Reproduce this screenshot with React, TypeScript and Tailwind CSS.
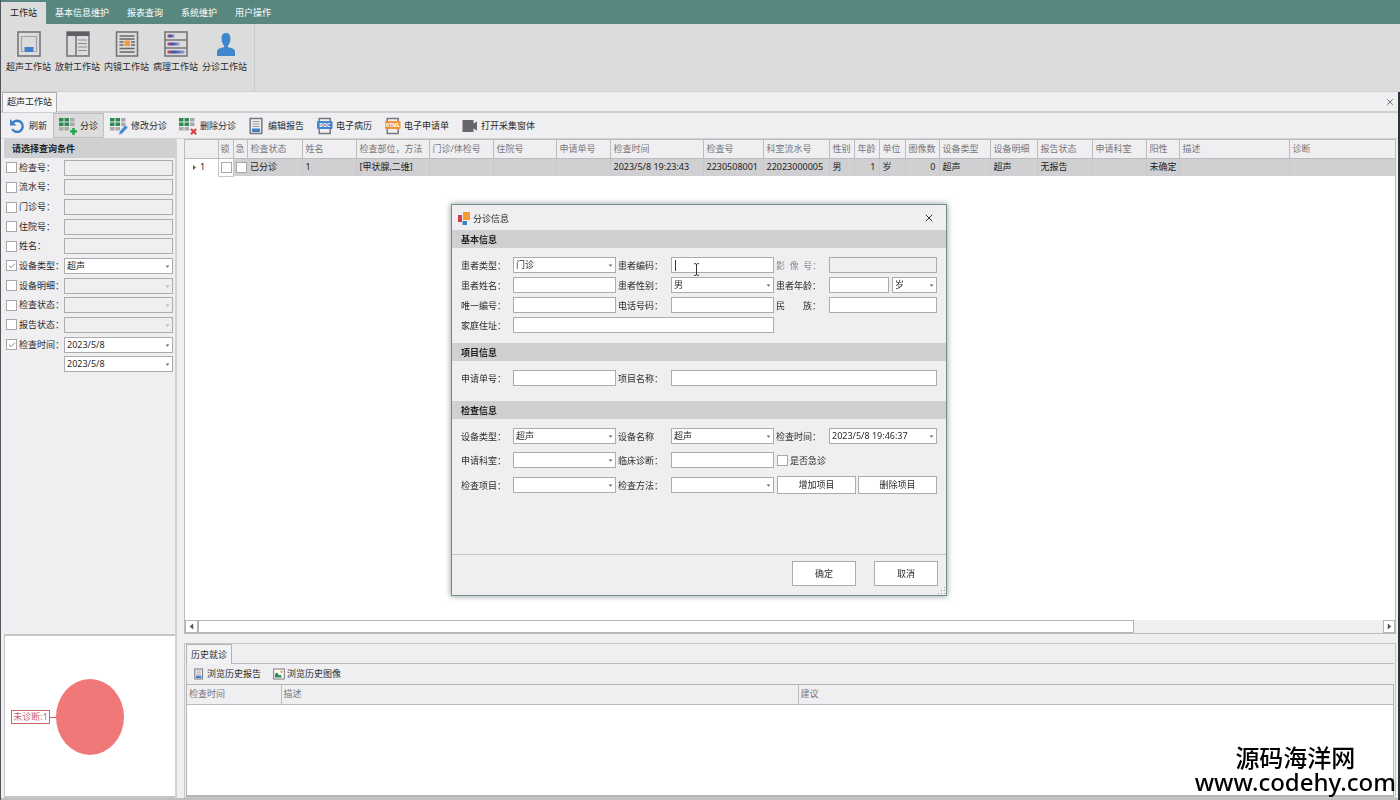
import React from "react";
import { Check, X } from "lucide-react";

const menus = ["工作站", "基本信息维护", "报表查询", "系统维护", "用户操作"];

/* ---------- icons ---------- */

const UltrasoundIcon = () => (
  <svg viewBox="0 0 24 26" className="w-6 h-[26px]" fill="none">
    <rect x="1" y="1" width="22" height="24" stroke="#77777b" strokeWidth="1.6" />
    <path d="M7 20.500H4.500v-15h15v15H17" stroke="#a3a3a7" strokeWidth="1.2" />
    <rect x="7.500" y="16" width="9" height="5" fill="#3f7fc9" />
  </svg>
);

const RadiologyIcon = () => (
  <svg viewBox="0 0 24 26" className="w-6 h-[26px]" fill="none">
    <rect x="1" y="1" width="22" height="24" stroke="#77777b" strokeWidth="1.6" />
    <rect x="1" y="1" width="22" height="4" fill="#5e5e64" />
    <path d="M10 5v20" stroke="#77777b" strokeWidth="1.6" />
    <path d="M12 9h9M12 12.500h9M12 16h9M12 19.500h9" stroke="#8d8d91" strokeWidth="1.2" />
  </svg>
);

const EndoscopeIcon = () => (
  <svg viewBox="0 0 24 26" className="w-6 h-[26px]" fill="none">
    <rect x="1.500" y="1" width="21" height="24" stroke="#77777b" strokeWidth="1.6" />
    <path
      d="M4.500 5h15M4.500 8h15M4.500 11h4M4.500 14h4M16 11h4M16 14h4M4.500 17.500h15M4.500 21h15"
      stroke="#66666b"
      strokeWidth="1.300"
    />
    <rect x="9.500" y="9.500" width="5.500" height="5.500" fill="#f29a3c" />
  </svg>
);

const PathologyIcon = () => (
  <svg viewBox="0 0 24 26" className="w-6 h-[26px]" fill="none">
    <defs>
      <linearGradient id="bar">
        <stop offset="0" stopColor="#d0505a" />
        <stop offset="0.400" stopColor="#3c4fa8" />
        <stop offset="1" stopColor="#9aa3cf" />
      </linearGradient>
    </defs>
    <rect x="1" y="1" width="22" height="24" stroke="#77777b" strokeWidth="1.6" />
    <path d="M1 9h22M1 17h22" stroke="#77777b" strokeWidth="1.6" />
    <rect x="3.500" y="3.500" width="7" height="3" fill="url(#bar)" />
    <rect x="3.500" y="11.500" width="12" height="3" fill="url(#bar)" />
    <rect x="3.500" y="19.500" width="17" height="3" fill="url(#bar)" />
  </svg>
);

const UserIcon = () => (
  <svg viewBox="0 0 24 26" className="w-6 h-[26px]" fill="#3f86cc">
    <path d="M13 2c3 0 4.500 2.200 4.500 5.500 0 3-1.300 6-2.700 7.200v1.300l4.700 1.500c1.700.5 2.500 1.800 2.500 3.500v4H4v-4c0-1.700.8-3 2.500-3.500l4.700-1.500v-1.300C9.800 13.500 8.500 10.500 8.500 7.500 8.500 4.200 10 2 13 2z" />
  </svg>
);

const RefreshIcon = () => (
  <svg viewBox="0 0 18 18" className="w-[18px] h-[18px]" fill="none">
    <path d="M5 5.500a5.600 5.600 0 1 1-.8 6.500" stroke="#3f7fc9" strokeWidth="2.400" />
    <path d="M2 2v6.500h6.500z" fill="#3f7fc9" />
  </svg>
);

const GridIcon = ({ kind }: { kind: "add" | "edit" | "remove" }) => (
  <svg viewBox="0 0 18 18" className="w-[18px] h-[18px]">
    <path d="M0 1h4.500v3.500H0zM5.500 1h4.500v3.500H5.500zM0 5.500h4.500v3.500H0zM5.500 5.500h4.500v3.500H5.500z" fill="#2f8a50" />
    <path d="M11 1h4.500v3.500H11zM11 5.500h4.500v3.500H11zM0 10h4.500v3.500H0zM5.500 10h4.500v3.500H5.500z" fill="#a9a9ad" />
    {kind === "add" && (
      <path d="M13.300 11h2.400v2.200H18v2.400h-2.300V18h-2.400v-2.400H11v-2.400h2.300z" fill="#1fa046" />
    )}
    {kind === "edit" && (
      <path d="M15.200 7.800l2.800 2.600-5.800 6.400-3.600 1.200 1-3.800z" fill="#4a8bd6" stroke="#efeef1" strokeWidth="0.600" />
    )}
    {kind === "remove" && (
      <path d="M12 12l5.200 5.200M17.200 12L12 17.200" stroke="#d8403a" strokeWidth="2" />
    )}
  </svg>
);

const ReportIcon = ({ className }: { className: string }) => (
  <svg viewBox="0 0 17 18" className={className} fill="none">
    <rect x="2.200" y="1.500" width="11.600" height="15" stroke="#77777b" strokeWidth="1.500" />
    <path d="M4.500 4.500h7M4.500 7h7M4.500 9.500h7" stroke="#9a9a9e" />
    <rect x="4" y="11.500" width="8" height="3.500" fill="#3f7fc9" />
  </svg>
);

const TagIcon = ({ text, color }: { text: string; color: string }) => (
  <svg viewBox="0 0 17 18" className="w-[17px] h-[18px]" fill="none">
    <rect x="3.200" y="1.500" width="11" height="15" stroke="#77777b" strokeWidth="1.500" />
    <rect x="1" y="4" width="15.500" height="8" rx="1" fill={color} />
    <text x="8.700" y="10" textAnchor="middle" fontSize="5" fontWeight="700" fill="#fff">
      {text}
    </text>
  </svg>
);

const CameraIcon = () => (
  <svg viewBox="0 0 17 18" className="w-[17px] h-[18px]" fill="#66666b">
    <path d="M1.500 3h11v3.500l3.500-2v9l-3.500-2V15h-11z" />
  </svg>
);

const PictureIcon = () => (
  <svg viewBox="0 0 12 12" className="w-3 h-3" fill="none">
    <rect x="0.700" y="1" width="10.600" height="10" stroke="#77777b" fill="#fff" />
    <path d="M2 9.500V6l2-1.500 2.500 3 1-1 1.500 3z" fill="#2f8a50" />
    <circle cx="8.500" cy="3.800" r="1.200" fill="#f29a3c" />
  </svg>
);

const Arrow = ({ className }: { className: string }) => (
  <svg viewBox="0 0 6 4" className={className}>
    <path d="M0.500 0.500h5L3 3.500z" fill="currentColor" />
  </svg>
);

/* ---------- form controls ---------- */

const CheckBox = ({ id, checked, label }: { id: string; checked?: boolean; label?: string }) => (
  <span className="relative flex w-[11px] h-[11px] shrink-0">
    <input
      id={id}
      type="checkbox"
      aria-label={label}
      defaultChecked={checked}
      className="peer appearance-none w-full h-full bg-white border border-[#a8a8ab]"
    />
    <Check className="absolute inset-0 m-auto w-2 h-2 hidden peer-checked:block text-[#444] pointer-events-none" />
  </span>
);

type FieldProps = {
  id: string;
  value?: string;
  disabled?: boolean;
  label?: string;
  className?: string;
};

const TextBox = ({ id, value = "", disabled, label, className = "" }: FieldProps) => (
  <input
    id={id}
    type="text"
    aria-label={label}
    defaultValue={value}
    disabled={disabled}
    className={`w-full min-w-0 h-4 px-0.5 bg-white border border-[#acacaf] outline-none disabled:bg-[#efeef1] ${className}`}
  />
);

const SelectBox = ({ id, value = "", disabled, label, className = "" }: FieldProps) => (
  <span className={`relative block w-full ${className}`}>
    <select
      id={id}
      aria-label={label}
      defaultValue={value}
      disabled={disabled}
      className="block appearance-none w-full h-4 px-0.5 bg-white border border-[#acacaf] outline-none disabled:bg-[#efeef1] disabled:opacity-100"
    >
      <option>{value}</option>
    </select>
    <Arrow
      className={`absolute right-[3px] top-[7px] w-[5px] h-[3px] pointer-events-none ${
        disabled ? "text-[#b5b5b8]" : "text-[#66666a]"
      }`}
    />
  </span>
);

/* ---------- page parts ---------- */

const stations = [
  { name: "超声工作站", icon: <UltrasoundIcon /> },
  { name: "放射工作站", icon: <RadiologyIcon /> },
  { name: "内镜工作站", icon: <EndoscopeIcon /> },
  { name: "病理工作站", icon: <PathologyIcon /> },
  { name: "分诊工作站", icon: <UserIcon /> },
];

const tools = [
  { name: "刷新", icon: <RefreshIcon /> },
  { name: "分诊", icon: <GridIcon kind="add" />, active: true },
  { name: "修改分诊", icon: <GridIcon kind="edit" /> },
  { name: "删除分诊", icon: <GridIcon kind="remove" /> },
  { name: "编辑报告", icon: <ReportIcon className="w-[17px] h-[18px]" /> },
  { name: "电子病历", icon: <TagIcon text="DOC" color="#3f86cc" /> },
  { name: "电子申请单", icon: <TagIcon text="HTML" color="#f0953a" /> },
  { name: "打开采集窗体", icon: <CameraIcon /> },
];

const filters = [
  { id: "f1", name: "检查号：" },
  { id: "f2", name: "流水号：" },
  { id: "f3", name: "门诊号：" },
  { id: "f4", name: "住院号：" },
  { id: "f5", name: "姓名：" },
  { id: "f6", name: "设备类型：", select: true, checked: true, value: "超声" },
  { id: "f7", name: "设备明细：", select: true },
  { id: "f8", name: "检查状态：", select: true },
  { id: "f9", name: "报告状态：", select: true },
  { id: "f10", name: "检查时间：", select: true, checked: true, value: "2023/5/8" },
];

const columns = [
  { name: "检查状态", width: "w-[55px]", value: "已分诊" },
  { name: "姓名", width: "w-[54px]", value: "1" },
  { name: "检查部位，方法", width: "w-[73px]", value: "[甲状腺,二维]" },
  { name: "门诊/体检号", width: "w-[64px]", value: "" },
  { name: "住院号", width: "w-[63px]", value: "" },
  { name: "申请单号", width: "w-[54px]", value: "" },
  { name: "检查时间", width: "w-[93px]", value: "2023/5/8 19:23:43" },
  { name: "检查号", width: "w-[60px]", value: "2230508001" },
  { name: "科室流水号", width: "w-[66px]", value: "22023000005" },
  { name: "性别", width: "w-[25px]", value: "男" },
  { name: "年龄", width: "w-[25px]", value: "1", right: true },
  { name: "单位", width: "w-[26px]", value: "岁" },
  { name: "图像数", width: "w-[34px]", value: "0", right: true },
  { name: "设备类型", width: "w-[51px]", value: "超声" },
  { name: "设备明细", width: "w-[47px]", value: "超声" },
  { name: "报告状态", width: "w-[55px]", value: "无报告" },
  { name: "申请科室", width: "w-[54px]", value: "" },
  { name: "阳性", width: "w-[33px]", value: "未确定" },
  { name: "描述", width: "w-[110px]", value: "" },
  { name: "诊断", width: "", value: "" },
];

const Sidebar = () => (
  <aside className="w-[173px] shrink-0 flex flex-col border-r-2 border-[#d3d3d5]">
    <h2 className="h-[19px] pl-2 pt-1 bg-[#d0d0d2] font-bold text-[#222]">请选择查询条件</h2>
    <div className="h-[216px] grid grid-rows-[repeat(11,1fr)] pl-0.5 pr-0.5">
      {filters.map((f) => (
        <div key={f.id} className="flex items-center">
          <CheckBox id={`${f.id}c`} checked={f.checked} />
          <label htmlFor={`${f.id}c`} className="w-[47px] pl-0.5 shrink-0 whitespace-nowrap">
            {f.name}
          </label>
          {f.select ? (
            <SelectBox id={f.id} label={f.name} value={f.value} disabled={!f.checked} />
          ) : (
            <TextBox id={f.id} label={f.name} disabled />
          )}
        </div>
      ))}
      <div className="flex items-center pl-[58px]">
        <SelectBox id="f11" label="检查时间" value="2023/5/8" />
      </div>
    </div>
    <div className="mt-auto h-[164px] flex items-center pl-1.5 pt-0.5 bg-white border-y-2 border-l border-[#c6c6c8]">
      <span className="border border-[#c9646c] text-[#c9646c] w-[39px] h-[14px] text-center leading-3">
        未诊断:1
      </span>
      <span className="w-1.5 h-px bg-[#c9646c]" />
      <svg viewBox="0 0 68 76" className="w-[68px] h-[76px]">
        <ellipse cx="34" cy="38" rx="34" ry="38" fill="#f07878" />
      </svg>
    </div>
  </aside>
);

const ExamTable = () => (
  <div className="flex-1 flex flex-col bg-white border border-[#bcbcbf]">
    <table className="table-fixed w-full border-collapse text-left whitespace-nowrap">
      <thead>
        <tr className="h-[18px] bg-[#efeef1] text-[#77777a]">
          <th className="w-[33px] border-r border-b border-[#bcbcbf]" />
          <th className="w-[15px] pl-0.5 font-normal border-r border-b border-[#bcbcbf]">锁</th>
          <th className="w-[14px] pl-0.5 font-normal border-r border-b border-[#bcbcbf]">急</th>
          {columns.map((c) => (
            <th
              key={c.name}
              className={`${c.width} pl-[3px] font-normal overflow-hidden border-r border-b last:border-r-0 border-[#bcbcbf]`}
            >
              {c.name}
            </th>
          ))}
        </tr>
      </thead>
      <tbody>
        <tr className="h-[18px] bg-[#d0d0d2] text-[#222]">
          <td className="bg-white">
            <span className="flex items-center pl-2 gap-1">
              <svg viewBox="0 0 3 5" className="w-[3px] h-[5px]">
                <path d="M0 0l3 2.500L0 5z" fill="#555" />
              </svg>
              1
            </span>
          </td>
          <td className="bg-white pl-0.5 border border-[#c8c8ca]">
            <CheckBox id="lock" label="锁" />
          </td>
          <td className="pl-0.5">
            <CheckBox id="urgent" label="急" />
          </td>
          {columns.map((c) => (
            <td
              key={c.name}
              className={`px-[3px] border-r last:border-r-0 border-[#c8c8ca] ${c.right ? "text-right" : ""}`}
            >
              {c.value}
            </td>
          ))}
        </tr>
      </tbody>
    </table>
    <div className="mt-auto flex justify-between h-[13px] bg-[#efeef1]">
      <button aria-label="向左" className="w-[13px] flex items-center justify-center bg-white border border-[#b4b4b7]">
        <Arrow className="w-[7px] h-[5px] rotate-90 text-[#555]" />
      </button>
      <div className="flex-1">
        <div className="w-[79%] h-full bg-white border border-[#b4b4b7]" />
      </div>
      <button aria-label="向右" className="w-3 flex items-center justify-center bg-white border border-[#b4b4b7]">
        <Arrow className="w-[7px] h-[5px] -rotate-90 text-[#555]" />
      </button>
    </div>
  </div>
);

const History = () => (
  <section className="h-[155px] mt-[9px] flex flex-col border border-[#c6c6c8] px-px">
    <div className="flex h-5 border-b border-[#bcbcbf]">
      <button className="h-5 w-[46px] bg-[#f3f2f5] border border-b-0 border-[#b4b4b7]">历史就诊</button>
    </div>
    <div className="flex items-center h-5 pl-1.5 gap-3 border-l border-[#bcbcbf]">
      <button className="flex items-center gap-0.5">
        <ReportIcon className="w-3 h-3" />
        浏览历史报告
      </button>
      <button className="flex items-center gap-0.5">
        <PictureIcon />
        浏览历史图像
      </button>
    </div>
    <div className="flex-1 bg-white border border-[#b4b4b7] border-b-2">
      <table className="table-fixed w-full text-left">
        <thead>
          <tr className="h-[19px] bg-[#efeef1] text-[#77777a]">
            <th className="w-[94px] pl-0.5 font-normal border-r border-b border-[#bcbcbf]">检查时间</th>
            <th className="w-[517px] pl-0.5 font-normal border-r border-b border-[#bcbcbf]">描述</th>
            <th className="pl-0.5 font-normal border-b border-[#bcbcbf]">建议</th>
          </tr>
        </thead>
      </table>
    </div>
  </section>
);

const SectionTitle = ({ children }: { children: React.ReactNode }) => (
  <h3 className="h-[18px] pl-[9px] pt-1 bg-[#d0d0d2] font-bold text-[#222]">{children}</h3>
);

const FormLabel = ({ id, first, children }: { id: string; first?: boolean; children: React.ReactNode }) => (
  <label htmlFor={id} className={`whitespace-pre pt-0.5 ${first ? "" : "pl-0.5"}`}>
    {children}
  </label>
);

const formGrid =
  "grid grid-cols-[52px_103px_55px_103px_55px_1fr] items-center px-[9px] pt-[9px]";

const TriageDialog = () => (
  <div className="fixed inset-0 flex items-center justify-center pr-0.5">
    <div
      role="dialog"
      aria-label="分诊信息"
      className="relative w-[496px] bg-[#efeef1] border border-[#6f918b] shadow-[0_0_6px_rgba(60,80,80,0.6)]"
    >
      <div className="flex items-center justify-between h-[25px] pl-1.5 pr-[11px]">
        <div className="flex items-center gap-0.5 pt-0.5">
          <svg viewBox="0 0 13 14" className="w-[13px] h-[14px]">
            <rect x="0" y="3" width="4" height="7" fill="#d23c3c" />
            <rect x="5" y="0" width="7" height="8" fill="#f79a32" />
            <rect x="4.500" y="9" width="4.500" height="4" fill="#3f7fc9" />
          </svg>
          分诊信息
        </div>
        <button aria-label="关闭">
          <X className="w-3 h-3 text-[#333]" />
        </button>
      </div>

      <SectionTitle>基本信息</SectionTitle>
      <div className={`${formGrid} gap-y-1 pb-2.5`}>
        <FormLabel id="ptype" first>患者类型：</FormLabel>
        <SelectBox id="ptype" value="门诊" />
        <FormLabel id="pcode">患者编码：</FormLabel>
        <span className="relative block">
          <TextBox id="pcode" className="block" />
          <span className="absolute left-1 top-[3px] w-px h-[11px] bg-[#333]" />
          <svg viewBox="0 0 7 13" className="absolute left-[22px] top-1.5 w-[7px] h-[13px]" fill="none">
            <path d="M1 0.700h1.800l.7.600.7-.6H6M3.500 1v11M1 12.300h1.800l.7-.6.7.600H6" stroke="#333" />
          </svg>
        </span>
        <FormLabel id="imgno">
          <span className="text-[#8a8a8d]">{"影  像  号："}</span>
        </FormLabel>
        <TextBox id="imgno" disabled />

        <FormLabel id="pname" first>患者姓名：</FormLabel>
        <TextBox id="pname" />
        <FormLabel id="psex">患者性别：</FormLabel>
        <SelectBox id="psex" value="男" />
        <FormLabel id="page">患者年龄：</FormLabel>
        <div className="flex gap-[3px]">
          <TextBox id="page" />
          <SelectBox id="unit" label="年龄单位" value="岁" className="max-w-[45px]" />
        </div>

        <FormLabel id="uid" first>唯一编号：</FormLabel>
        <TextBox id="uid" />
        <FormLabel id="phone">电话号码：</FormLabel>
        <TextBox id="phone" />
        <FormLabel id="nation">民　　族：</FormLabel>
        <TextBox id="nation" />

        <FormLabel id="addr" first>家庭住址：</FormLabel>
        <TextBox id="addr" className="col-span-3" />
      </div>

      <SectionTitle>项目信息</SectionTitle>
      <div className={`${formGrid} pb-[15px]`}>
        <FormLabel id="reqno" first>申请单号：</FormLabel>
        <TextBox id="reqno" />
        <FormLabel id="item">项目名称：</FormLabel>
        <TextBox id="item" className="col-span-3" />
      </div>

      <SectionTitle>检查信息</SectionTitle>
      <div className={`${formGrid} gap-y-2 pb-[60px]`}>
        <FormLabel id="dtype" first>设备类型：</FormLabel>
        <SelectBox id="dtype" value="超声" />
        <FormLabel id="dname">设备名称</FormLabel>
        <SelectBox id="dname" value="超声" />
        <FormLabel id="dtime">检查时间：</FormLabel>
        <SelectBox id="dtime" value="2023/5/8 19:46:37" />

        <FormLabel id="dept" first>申请科室：</FormLabel>
        <SelectBox id="dept" />
        <FormLabel id="diag">临床诊断：</FormLabel>
        <TextBox id="diag" />
        <div className="col-span-2 flex items-center pl-[3px] gap-0.5">
          <CheckBox id="emergency" />
          <label htmlFor="emergency" className="pt-0.5">是否急诊</label>
        </div>

        <FormLabel id="citem" first>检查项目：</FormLabel>
        <SelectBox id="citem" />
        <FormLabel id="cway">检查方法：</FormLabel>
        <SelectBox id="cway" />
        <div className="col-span-2 flex pl-[3px] gap-0.5">
          <button className="flex-1 h-[18px] bg-white border border-[#acacaf]">增加项目</button>
          <button className="flex-1 h-[18px] bg-white border border-[#acacaf]">删除项目</button>
        </div>
      </div>

      <div className="flex justify-end gap-[18px] pt-1.5 pb-[9px] pr-2 border-t border-[#c6c6c8]">
        <button className="w-16 h-[25px] bg-white border border-[#acacaf]">确定</button>
        <button className="w-16 h-[25px] bg-white border border-[#acacaf]">取消</button>
      </div>
      <svg viewBox="0 0 8 8" className="absolute right-0 bottom-0 w-2 h-2" fill="#a0a0a3">
        <path d="M6 0h1v1H6zM3 3h1v1H3zM6 3h1v1H6zM0 6h1v1H0zM3 6h1v1H3zM6 6h1v1H6z" />
      </svg>
    </div>
  </div>
);

export default function App() {
  return (
    <div
      lang="zh-CN"
      className="relative min-h-screen flex flex-col overflow-hidden bg-[#efeef1] text-[#2b2b2b] text-[9px] leading-3 font-['Noto_Sans','Noto_Sans_CJK_SC',sans-serif] border-l border-[#55555c]"
    >
      <nav className="flex h-6 pt-0.5 bg-[#588780]">
        {menus.map((m, i) => (
          <button
            key={m}
            className={`px-[9px] whitespace-nowrap ${i === 0 ? "bg-[#dcdcdc] text-[#222]" : "text-white"}`}
          >
            {m}
          </button>
        ))}
      </nav>

      <div className="flex h-[68px] pl-[3px] bg-[#dcdcdc] border-b border-[#cfcfd1]">
        <div className="flex pr-[5px] border-r border-[#cbcbcd]">
          {stations.map((s) => (
            <button key={s.name} className="w-[49px] flex flex-col items-center pt-[7px] gap-1 whitespace-nowrap">
              {s.icon}
              {s.name}
            </button>
          ))}
        </div>
      </div>

      <div className="flex-1 flex flex-col border-r-2 border-[#2f3138]">
        <div className="flex justify-between items-center h-[21px] pl-px border-b-2 border-[#cfcfd1]">
          <button className="w-[55px] h-5 bg-[#f5f4f7] border border-b-0 border-[#acacaf]">超声工作站</button>
          <button aria-label="关闭标签" className="pr-[3px]">
            <X className="w-2.5 h-2.5 text-[#55555a]" />
          </button>
        </div>

        <div className="flex h-[26px] pl-px border-b border-[#d3d3d5]">
          {tools.map((t) => (
            <button
              key={t.name}
              className={`flex items-center gap-[3px] whitespace-nowrap ${
                t.active ? "px-[5px] bg-[#dcdcdd] border border-[#c0c0c3]" : "px-1.5"
              }`}
            >
              {t.icon}
              {t.name}
            </button>
          ))}
        </div>

        <div className="flex-1 flex pl-[3px] pr-0.5 gap-[7px] border-b-2 border-[#c0c0c3]">
          <Sidebar />
          <main className="flex-1 min-w-0 flex flex-col">
            <ExamTable />
            <History />
          </main>
        </div>
      </div>

      <TriageDialog />

      <div className="absolute right-1 bottom-1.5 text-center text-black font-medium text-[24px] leading-6 pointer-events-none">
        <p>源码海洋网</p>
        <p>www.codehy.com</p>
      </div>
    </div>
  );
}
